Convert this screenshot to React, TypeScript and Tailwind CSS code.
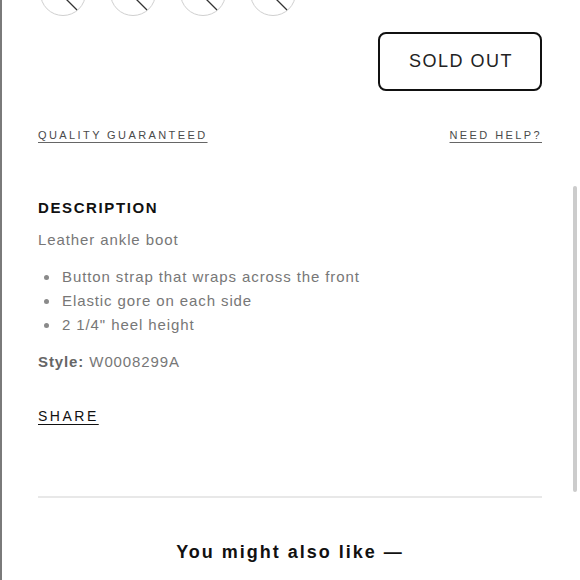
import React from "react";

const font = { fontFamily: '"Liberation Sans", Arial, Helvetica, sans-serif' };

function Swatch() {
  return (
    <svg width="46" height="46" viewBox="0 0 46 46" className="block">
      <circle cx="23" cy="23" r="22.5" fill="none" stroke="#cfcfcf" strokeWidth="1" />
      <line x1="6" y1="9" x2="37" y2="40" stroke="#333" strokeWidth="1.3" />
    </svg>
  );
}

export default function App() {
  const bullets = [
    "Button strap that wraps across the front",
    "Elastic gore on each side",
    '2 1/4" heel height',
  ];
  return (
    <div
      className="relative w-[580px] h-[580px] overflow-hidden bg-white border-l-2 border-[#7a7a7a]"
      style={font}
    >
      <div className="pl-[36px] w-[540px]">
        <div className="flex gap-[24px] ml-[2px] mt-[-30px]">
          <Swatch />
          <Swatch />
          <Swatch />
          <Swatch />
        </div>

        <div className="flex justify-end mt-[16px]">
          <div className="w-[164px] h-[59px] border-2 border-[#111] rounded-[8px] flex items-center justify-center text-[18px] tracking-[1.5px] text-[#222] pl-[2px]">
            SOLD OUT
          </div>
        </div>

        <div className="flex justify-between mt-[36px] text-[11px] leading-[16px] tracking-[2.4px] text-[#4a4a4a]">
          <span className="underline underline-offset-[3px] decoration-[#666]">QUALITY GUARANTEED</span>
          <span className="underline underline-offset-[3px] decoration-[#666]">NEED HELP?</span>
        </div>

        <div className="mt-[56px] text-[15px] leading-[18px] font-bold tracking-[1.6px] text-[#111]">
          DESCRIPTION
        </div>
        <div className="mt-[14px] text-[15px] leading-[18px] tracking-[0.9px] text-[#777]">
          Leather ankle boot
        </div>
        <ul className="mt-[16px] flex flex-col">
          {bullets.map((b) => (
            <li key={b} className="flex items-center h-[24px] text-[15px] tracking-[0.9px] text-[#777]">
              <span className="w-[5px] h-[5px] rounded-full bg-[#8a8a8a] ml-[6px] mr-[13px]" />
              {b}
            </li>
          ))}
        </ul>
        <div className="mt-[16px] text-[15px] leading-[18px] tracking-[0.9px] text-[#777]">
          <span className="font-bold text-[#666]">Style:</span> W0008299A
        </div>

        <div className="mt-[36px] text-[14px] leading-[18px] tracking-[2.5px] text-[#111]">
          <span className="underline underline-offset-[3px]">SHARE</span>
        </div>

        <div className="mt-[71px] h-[2px] bg-[#e8e8e8]" />

        <div className="mt-[43px] text-center text-[18px] leading-[22px] font-bold tracking-[2px] text-[#111]">
          You might also like —
        </div>
      </div>

      <div className="absolute left-[571px] top-[186px] w-[4px] h-[306px] rounded-full bg-[#cccccc]" />
    </div>
  );
}
